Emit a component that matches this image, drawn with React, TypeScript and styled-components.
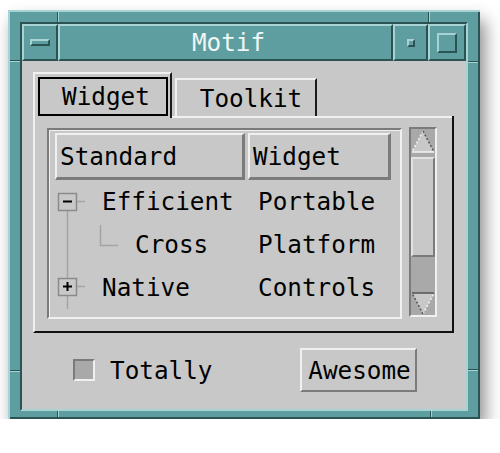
import React from 'react';
import styled, { createGlobalStyle } from 'styled-components';

const GRAY = '#c8c8c8';
const TROUGH = '#a9a9a9';
const LIGHT = '#f0f0f0';
const DARK = '#7b7b7b';
const TEAL = '#5f9ea0';
const TEAL_LIGHT = '#a7d3d4';
const TEAL_DARK = '#2c5354';

type TreeKind = 'open' | 'leaf' | 'closed';

interface Row {
  kind: TreeKind;
  name: string;
  value: string;
}

const rows: Row[] = [
  { kind: 'open', name: 'Efficient', value: 'Portable' },
  { kind: 'leaf', name: 'Cross', value: 'Platform' },
  { kind: 'closed', name: 'Native', value: 'Controls' },
];

const GlobalStyle = createGlobalStyle`
  body {
    margin: 0;
    background: #ffffff;
    font-family: "DejaVu Sans Mono", "Liberation Mono", monospace;
    font-size: 24.3px;
    color: #000;
  }
`;

const TreeGlyph = ({ kind }: { kind: TreeKind }) => {
  if (kind === 'leaf') {
    return (
      <svg width="80" height="43" viewBox="0 0 80 43">
        <path d="M12.5 0V43" stroke="#a4a4a4" strokeWidth="1.5" fill="none" />
        <path d="M45.5 2V22.5H63" stroke="#a4a4a4" strokeWidth="1.5" fill="none" />
      </svg>
    );
  }
  const boxTop = kind === 'open' ? 13 : 12;
  const mid = boxTop + 8.5;
  return (
    <svg width="47" height="43" viewBox="0 0 47 43">
      {kind === 'closed' && (
        <path d={`M12.5 0V${boxTop}`} stroke="#a4a4a4" strokeWidth="1.5" fill="none" />
      )}
      <path d={`M12.5 ${boxTop + 17}V43`} stroke="#a4a4a4" strokeWidth="1.5" fill="none" />
      <path d={`M22 ${mid}H30`} stroke="#a4a4a4" strokeWidth="1.5" fill="none" />
      <rect x="3.5" y={boxTop + 0.5} width="18" height="17" fill="none" stroke="#8a8a8a" strokeWidth="1.5" />
      <path d={`M8 ${mid}H17`} stroke="#000" strokeWidth="2" />
      {kind === 'closed' && <path d={`M12.5 ${mid - 4.5}V${mid + 4.5}`} stroke="#000" strokeWidth="2" />}
    </svg>
  );
};

const ArrowGlyph = ({ down }: { down?: boolean }) => (
  <svg width="24" height="23" viewBox="0 0 24 23">
    <g transform={down ? 'rotate(180 12 11.5)' : undefined}>
      <polygon points="12,1 1,22 23,22" fill={GRAY} />
      <path d="M12 1L1 22" stroke={LIGHT} strokeWidth="1.6" strokeDasharray="2 2" fill="none" />
      <path d="M12 1L23 22" stroke="#5a5a5a" strokeWidth="1.6" strokeDasharray="2 2" fill="none" />
      <path d="M1 22H23" stroke={down ? '#5a5a5a' : LIGHT} strokeWidth="1.6" fill="none" />
    </g>
  </svg>
);

const App: React.FC = () => (
  <>
    <GlobalStyle />
    <Frame>
      <Well>
        <TitleBar>
          <TitleButton width={36}>
            <MenuBar />
          </TitleButton>
          <TitleLabel>Motif</TitleLabel>
          <TitleButton width={35}>
            <MinimizeBox />
          </TitleButton>
          <TitleButton width={38}>
            <MaximizeBox />
          </TitleButton>
        </TitleBar>
        <Client>
          <TabRow>
            <ActiveTab>
              <FocusRect>Widget</FocusRect>
            </ActiveTab>
            <Tab>Toolkit</Tab>
          </TabRow>
          <Panel>
            <ListFrame>
              <ListGrid>
                <HeaderButton>Standard</HeaderButton>
                <HeaderButton>Widget</HeaderButton>
                {rows.map((row) => (
                  <React.Fragment key={row.name}>
                    <TreeCell>
                      <TreeGlyph kind={row.kind} />
                      <span>{row.name}</span>
                    </TreeCell>
                    <ValueCell>{row.value}</ValueCell>
                  </React.Fragment>
                ))}
              </ListGrid>
            </ListFrame>
            <ScrollBar>
              <ArrowButton>
                <ArrowGlyph />
              </ArrowButton>
              <Slider />
              <TroughRest />
              <ArrowButton>
                <ArrowGlyph down />
              </ArrowButton>
            </ScrollBar>
          </Panel>
          <BottomRow>
            <CheckBox />
            <CheckLabel>Totally</CheckLabel>
            <PushButton type="button">Awesome</PushButton>
          </BottomRow>
        </Client>
      </Well>
    </Frame>
  </>
);

const notchV = `linear-gradient(to right, ${TEAL_DARK} 0 1px, ${TEAL_LIGHT} 1px 2px)`;
const notchH = `linear-gradient(${TEAL_DARK} 0 1px, ${TEAL_LIGHT} 1px 2px)`;

const Frame = styled.div`
  box-sizing: border-box;
  width: 472px;
  height: 409px;
  margin: 10px 0 0 8px;
  padding: 12px;
  background-color: ${TEAL};
  background-image: ${notchV}, ${notchH}, ${notchV}, ${notchH}, ${notchH}, ${notchV}, ${notchH}, ${notchV};
  background-size: 2px 14px, 14px 2px, 2px 14px, 14px 2px, 14px 2px, 2px 14px, 14px 2px, 2px 14px;
  background-position: 49px 0, 0 50px, 420px 0, 458px 51px, 0 360px, 49px 395px, 458px 359px, 422px 395px;
  background-repeat: no-repeat;
  box-shadow:
    inset 2px 2px 0 ${TEAL_LIGHT},
    inset -2px -2px 0 ${TEAL_DARK},
    5px 10px 16px rgba(0, 0, 0, 0.45);
`;

const Well = styled.div`
  display: flex;
  flex-direction: column;
  height: 100%;
  border: 2px solid;
  border-color: ${TEAL_DARK} ${TEAL_LIGHT} ${TEAL_LIGHT} ${TEAL_DARK};
`;

const TitleBar = styled.div`
  display: flex;
  height: 37px;
  background: ${TEAL};
`;

const TitleButton = styled.div<{ width: number }>`
  box-sizing: border-box;
  width: ${({ width }) => width}px;
  display: flex;
  align-items: center;
  justify-content: center;
  border: 2px solid;
  border-color: ${TEAL_LIGHT} ${TEAL_DARK} ${TEAL_DARK} ${TEAL_LIGHT};
`;

const TitleLabel = styled.div`
  flex: 1;
  display: flex;
  align-items: center;
  justify-content: center;
  padding-left: 6px;
  color: #eef6f6;
  border: 2px solid;
  border-color: ${TEAL_LIGHT} ${TEAL_DARK} ${TEAL_DARK} ${TEAL_LIGHT};
`;

const MenuBar = styled.div`
  box-sizing: border-box;
  width: 20px;
  height: 7px;
  margin-top: -1px;
  border: 2px solid;
  border-color: ${TEAL_LIGHT} ${TEAL_DARK} ${TEAL_DARK} ${TEAL_LIGHT};
`;

const MinimizeBox = styled.div`
  box-sizing: border-box;
  width: 8px;
  height: 8px;
  border: 2px solid;
  border-color: ${TEAL_LIGHT} ${TEAL_DARK} ${TEAL_DARK} ${TEAL_LIGHT};
`;

const MaximizeBox = styled.div`
  box-sizing: border-box;
  width: 20px;
  height: 20px;
  border: 2px solid;
  border-color: ${TEAL_LIGHT} ${TEAL_DARK} ${TEAL_DARK} ${TEAL_LIGHT};
`;

const Client = styled.div`
  flex: 1;
  display: flex;
  flex-direction: column;
  background: ${GRAY};
  padding: 11px 12px 0 11px;
`;

const TabRow = styled.div`
  display: flex;
  align-items: flex-end;
  height: 46px;
  background:
    linear-gradient(to left, #111 0 2px, transparent 2px) bottom / 100% 2px no-repeat,
    linear-gradient(to top, ${LIGHT} 0 2px, transparent 2px);
`;

const ActiveTab = styled.div`
  box-sizing: border-box;
  width: 139px;
  height: 46px;
  display: flex;
  padding: 3px 2px 2px 3px;
  background: ${GRAY};
  border-top: 2px solid ${LIGHT};
  border-left: 2px solid ${LIGHT};
  border-right: 2px solid #1a1a1a;
`;

const FocusRect = styled.div`
  flex: 1;
  display: flex;
  align-items: center;
  justify-content: center;
  padding-left: 6px;
  border: 2px solid #000;
`;

const Tab = styled.div`
  box-sizing: border-box;
  width: 142px;
  height: 38px;
  margin: 0 0 2px 3px;
  display: flex;
  align-items: center;
  justify-content: center;
  padding-left: 10px;
  border-top: 2px solid ${LIGHT};
  border-left: 2px solid ${LIGHT};
  border-right: 2px solid #1a1a1a;
`;

const Panel = styled.div`
  box-sizing: border-box;
  height: 215px;
  display: flex;
  align-items: flex-start;
  gap: 7px;
  padding: 10px 15px 0 12px;
  border-left: 2px solid ${LIGHT};
  border-right: 2px solid #111;
  border-bottom: 2px solid #111;
`;

const ListFrame = styled.div`
  box-sizing: border-box;
  width: 355px;
  height: 191px;
  padding: 3px 6px;
  border: 2px solid;
  border-color: ${DARK} ${LIGHT} ${LIGHT} ${DARK};
  box-shadow: inset 1px 1px 0 ${LIGHT};
`;

const ListGrid = styled.div`
  display: grid;
  grid-template-columns: 190px 143px;
  grid-template-rows: 47px;
  grid-auto-rows: 43px;
  column-gap: 3px;
`;

const HeaderButton = styled.div`
  display: flex;
  align-items: center;
  padding-left: 3px;
  border-top: 2px solid ${LIGHT};
  border-left: 2px solid ${LIGHT};
  border-bottom: 3px solid ${DARK};
  border-right: 3px solid ${DARK};
`;

const TreeCell = styled.div`
  display: flex;
  align-items: center;
  svg {
    flex-shrink: 0;
  }
`;

const ValueCell = styled.div`
  display: flex;
  align-items: center;
  padding-left: 10px;
`;

const ScrollBar = styled.div`
  box-sizing: border-box;
  width: 28px;
  height: 190px;
  margin-top: -1px;
  display: flex;
  flex-direction: column;
  background: ${TROUGH};
  border: 2px solid;
  border-color: ${DARK} ${LIGHT} ${LIGHT} ${DARK};
`;

const ArrowButton = styled.div`
  display: flex;
  justify-content: center;
  height: 24px;
  padding-top: 1px;
  box-sizing: border-box;
`;

const Slider = styled.div`
  box-sizing: border-box;
  height: 100px;
  margin-top: 4px;
  background: ${GRAY};
  border: 2px solid;
  border-color: #e2e2e2 ${DARK} ${DARK} #e2e2e2;
`;

const TroughRest = styled.div`
  flex: 1;
`;

const BottomRow = styled.div`
  display: flex;
  align-items: center;
  height: 44px;
  margin-top: 15px;
  padding-left: 40px;
`;

const CheckBox = styled.div`
  box-sizing: border-box;
  width: 22px;
  height: 22px;
  background: ${TROUGH};
  border: 2px solid;
  border-color: ${DARK} ${LIGHT} ${LIGHT} ${DARK};
`;

const CheckLabel = styled.span`
  margin-left: 15px;
`;

const PushButton = styled.button`
  box-sizing: border-box;
  width: 117px;
  height: 44px;
  margin: 0 37px 0 auto;
  padding: 0 0 0 2px;
  font: inherit;
  color: #000;
  background: ${GRAY};
  border: 2px solid;
  border-color: ${LIGHT} ${DARK} ${DARK} ${LIGHT};
  border-radius: 0;
`;

export default App;
